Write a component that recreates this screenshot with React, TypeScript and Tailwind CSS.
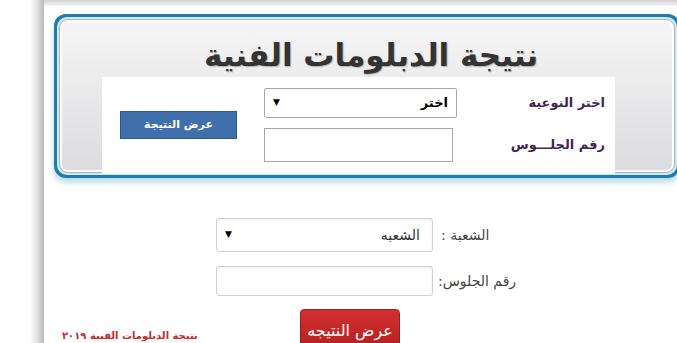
export default function App() {
    return (
        <div className="w-[677px] h-[343px] overflow-hidden bg-white flex" style={{ fontFamily: '"DejaVu Sans", Tahoma, sans-serif' }}>
            {/* left margin with page shadow */}
            <div className="w-[30px] shrink-0 bg-white" />
            <div className="w-[14px] shrink-0 bg-gradient-to-r from-white via-[#e2e2e2] to-[#b9b9b9]" />

            <div className="w-[633px] shrink-0 flex flex-col">
                <div className="h-[6px] shrink-0 bg-gradient-to-b from-[#d2d2d2] to-[#f4f4f4]" />

                {/* header box */}
                <div className="pl-[10px] pt-[8px]">
                    <div className="w-[626px] rounded-[12px] bg-[#1f7ea9] p-[3px] shadow-[0_4px_6px_rgba(40,140,180,0.35)]">
                        <div className="rounded-[10px] bg-[#cfe9f3] p-[2px]">
                            <div className="rounded-[9px] border border-[#b4b4b6] bg-gradient-to-b from-[#f6f6f7] to-[#dcdcde] shadow-[inset_0_0_0_2px_#ffffff] pl-[42px]">
                                <div className="w-[513px] h-[57px] flex items-end justify-center pl-[25px] pb-[6px]">
                                    <h1 dir="rtl" className="text-[31px] font-bold text-[#333] leading-none whitespace-nowrap [text-shadow:1px_1px_1px_rgba(0,0,0,0.25)]">
                                        نتيجة الدبلومات الفنية
                                    </h1>
                                </div>
                                <div dir="rtl" className="w-[513px] bg-white h-[97px] -mb-[2px] pr-[10px] pt-[11px] grid grid-cols-[148px_193px_1fr] grid-rows-[30px_34px] gap-y-[10px]">
                                    <span className="self-center text-[13px] font-bold text-[#4a1f55]">اختر النوعية</span>
                                    <div className="h-[30px] border border-[#a6a6a6] rounded-[2px] bg-white flex items-center justify-between px-[8px]">
                                        <span className="text-[13px] font-bold text-black">اختر</span>
                                        <span className="text-[9px] text-black">▼</span>
                                    </div>
                                    <div className="row-span-2 self-center justify-self-end ml-[18px] w-[117px] h-[28px] bg-[#3f70ab] border border-[#2b5990] flex items-center justify-center">
                                        <span className="text-[11px] font-bold text-white">عرض النتيجة</span>
                                    </div>
                                    <span className="self-center text-[13px] font-bold text-[#4a1f55]">رقم الجلـــوس</span>
                                    <div className="justify-self-end w-[189px] h-[34px] border border-[#a6a6a6] bg-white" />
                                </div>
                            </div>
                        </div>
                    </div>
                </div>

                {/* lower form */}
                <div dir="rtl" className="pr-[157px] pt-[40px] grid grid-cols-[82px_217px] grid-rows-[34px_30px] gap-y-[14px] gap-x-[5px] justify-start">
                    <span className="self-center justify-self-end text-[14px] text-[#444] pl-[3px]">الشعبة :</span>
                    <div className="h-[34px] border border-[#d0d0d0] rounded-[3px] bg-white shadow-[inset_0_1px_2px_rgba(0,0,0,0.08)] flex items-center justify-between pr-[12px] pl-[8px]">
                        <span className="text-[14px] text-[#333]">الشعبه</span>
                        <span className="text-[9px] text-black">▼</span>
                    </div>
                    <span className="self-center justify-self-end text-[14px] text-[#444]">رقم الجلوس:</span>
                    <div className="h-[30px] border border-[#d0d0d0] rounded-[3px] bg-white shadow-[inset_0_1px_2px_rgba(0,0,0,0.08)]" />
                </div>

                <div className="flex pt-[13px]">
                    <div className="w-[256px] pl-[18px] pt-[19px] text-left leading-[12px]">
                        <span className="text-[10px] font-bold text-[#c62b2b] whitespace-nowrap" dir="rtl">نتيجة الدبلومات الفنية ٢٠١٩</span>
                    </div>
                    <div className="w-[100px] h-[40px] rounded-[4px] bg-gradient-to-b from-[#d3302f] to-[#b61f22] border border-[#a01b1e] flex items-center justify-center pt-[4px]">
                        <span dir="rtl" className="text-[16px] text-white whitespace-nowrap">عرض النتيجه</span>
                    </div>
                </div>
            </div>
        </div>
    );
}
